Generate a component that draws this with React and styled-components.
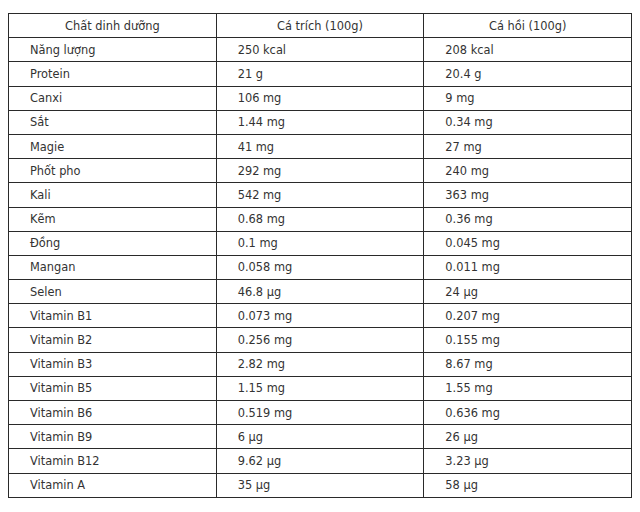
import React from 'react';
import styled, { createGlobalStyle } from 'styled-components';

const GlobalStyle = createGlobalStyle`
  body {
    margin: 0;
    background: #fff;
    font-family: "DejaVu Sans", sans-serif;
  }
`;

const Page = styled.div`
  padding: 13px 8px;
`;

const Table = styled.table`
  width: 624px;
  border-collapse: collapse;
  font-size: 11.4px;
  color: #333;
  table-layout: fixed;
`;

const Row = styled.tr`
  height: 24.2px;
`;

const Head = styled.th`
  border: 1px solid #2a2a2a;
  font-weight: normal;
  text-align: center;
  padding: 0 8px;
`;

const Cell = styled.td`
  border: 1px solid #2a2a2a;
  padding: 0 20px 0 21px;
  text-align: left;
`;

const rows = [
  ['Năng lượng', '250 kcal', '208 kcal'],
  ['Protein', '21 g', '20.4 g'],
  ['Canxi', '106 mg', '9 mg'],
  ['Sắt', '1.44 mg', '0.34 mg'],
  ['Magie', '41 mg', '27 mg'],
  ['Phốt pho', '292 mg', '240 mg'],
  ['Kali', '542 mg', '363 mg'],
  ['Kẽm', '0.68 mg', '0.36 mg'],
  ['Đồng', '0.1 mg', '0.045 mg'],
  ['Mangan', '0.058 mg', '0.011 mg'],
  ['Selen', '46.8 µg', '24 µg'],
  ['Vitamin B1', '0.073 mg', '0.207 mg'],
  ['Vitamin B2', '0.256 mg', '0.155 mg'],
  ['Vitamin B3', '2.82 mg', '8.67 mg'],
  ['Vitamin B5', '1.15 mg', '1.55 mg'],
  ['Vitamin B6', '0.519 mg', '0.636 mg'],
  ['Vitamin B9', '6 µg', '26 µg'],
  ['Vitamin B12', '9.62 µg', '3.23 µg'],
  ['Vitamin A', '35 µg', '58 µg'],
];

export default function App() {
  return (
    <Page>
      <GlobalStyle />
      <Table>
        <thead>
          <Row>
            <Head>Chất dinh dưỡng</Head>
            <Head>Cá trích (100g)</Head>
            <Head>Cá hồi (100g)</Head>
          </Row>
        </thead>
        <tbody>
          {rows.map(r => (
            <Row key={r[0]}>
              <Cell>{r[0]}</Cell>
              <Cell>{r[1]}</Cell>
              <Cell>{r[2]}</Cell>
            </Row>
          ))}
        </tbody>
      </Table>
    </Page>
  );
}
